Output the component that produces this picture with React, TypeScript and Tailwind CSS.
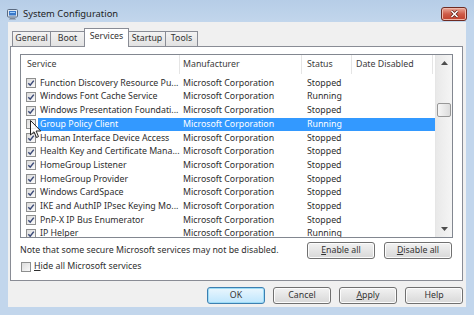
import React from "react";

const rows = [
  { name: "Function Discovery Resource Pu...", status: "Stopped", checked: true },
  { name: "Windows Font Cache Service", status: "Running", checked: true },
  { name: "Windows Presentation Foundati...", status: "Stopped", checked: true },
  { name: "Group Policy Client", status: "Running", checked: false, selected: true },
  { name: "Human Interface Device Access", status: "Stopped", checked: true },
  { name: "Health Key and Certificate Mana...", status: "Stopped", checked: true },
  { name: "HomeGroup Listener", status: "Stopped", checked: true },
  { name: "HomeGroup Provider", status: "Stopped", checked: true },
  { name: "Windows CardSpace", status: "Stopped", checked: true },
  { name: "IKE and AuthIP IPsec Keying Mo...", status: "Stopped", checked: true },
  { name: "PnP-X IP Bus Enumerator", status: "Stopped", checked: true },
  { name: "IP Helper", status: "Running", checked: true },
];

function Check({ checked }: { checked: boolean }) {
  return (
    <span className="flex h-[10px] w-[10px] shrink-0 items-center justify-center border border-[#8e8f8f] bg-gradient-to-br from-[#dcdcdc] to-[#fafafa]">
      {checked && (
        <svg width="8" height="8" viewBox="0 0 8 8">
          <path d="M1.3 4.2 L3.2 6.2 L6.8 1.6" fill="none" stroke="#3b4a78" strokeWidth="1.5" />
        </svg>
      )}
    </span>
  );
}

function Btn({ children, primary, wide }: { children: React.ReactNode; primary?: boolean; wide?: boolean }) {
  return (
    <div
      className={
        "flex h-[17px] items-center justify-center rounded-[3px] border text-[8.8px] text-[#333] " +
        (wide ? "w-[68px] " : "w-[58px] ") +
        (primary
          ? "border-[#3c7fb1] bg-gradient-to-b from-[#eaf6fd] to-[#bee6fd] shadow-[inset_0_0_0_1px_#9ddcf7]"
          : "border-[#707070] bg-gradient-to-b from-[#f2f2f2] to-[#d8d8d8] shadow-[inset_0_0_0_1px_#fcfcfc]")
      }
    >
      {children}
    </div>
  );
}

function Tab({ label, w, active }: { label: string; w: string; active?: boolean }) {
  return (
    <div
      className={
        "-ml-px flex items-center justify-center border border-[#898c95] text-[8.8px] text-[#333] " +
        w +
        (active
          ? " relative z-10 mb-[-1px] h-[19px] border-b-0 bg-white pb-[2px]"
          : " h-[15px] border-b-0 bg-gradient-to-b from-[#f3f3f3] to-[#e2e2e2]")
      }
    >
      {label}
    </div>
  );
}

function Arrow({ up }: { up?: boolean }) {
  return (
    <div className="flex h-[16px] items-center justify-center">
      <svg width="7" height="4" viewBox="0 0 7 4">
        <path d={up ? "M0 4 L3.5 0 L7 4 Z" : "M0 0 L3.5 4 L7 0 Z"} fill="#4d4d4d" />
      </svg>
    </div>
  );
}

export default function App() {
  return (
    <div
      className="relative flex h-[315px] w-[474px] flex-col overflow-hidden bg-[#c2d6ec]"
      style={{ fontFamily: '"Noto Sans", "Open Sans", sans-serif' }}
    >
      {/* Title bar */}
      <div className="flex h-[22px] items-center bg-gradient-to-b from-[#b6cde7] to-[#c2d6ec] pl-[7px] pr-[7px] pt-[6px]">
        <svg width="12" height="11" viewBox="0 0 12 11" className="mr-[4px]">
          <rect x="0.5" y="0.5" width="10" height="7.5" rx="1" fill="#dfe6ee" stroke="#5a6a80" />
          <rect x="2" y="2" width="7" height="4.5" fill="#3a78c8" />
          <rect x="3" y="3" width="5" height="1" fill="#9fd0ff" />
          <path d="M3 9 H8 L9 10.5 H2 Z" fill="#7d8898" />
        </svg>
        <span className="text-[9.4px] text-[#1e1e1e]">System Configuration</span>
        <div className="ml-auto flex h-[14px] w-[26px] items-center justify-center rounded-[3px] border border-[#6e2b22] bg-gradient-to-b from-[#e9a99b] via-[#cf5b48] to-[#c0402c] shadow-[inset_0_0_0_1px_#f0b8aa]">
          <svg width="9" height="8" viewBox="0 0 9 8">
            <path d="M1.5 1 L7.5 7 M7.5 1 L1.5 7" stroke="#5a1a12" strokeWidth="3" />
            <path d="M1.5 1 L7.5 7 M7.5 1 L1.5 7" stroke="#ffffff" strokeWidth="1.6" />
          </svg>
        </div>
      </div>

      {/* Client area */}
      <div className="mx-[8px] flex h-[285px] flex-col bg-[#f0f0f0]">
        {/* Tabs */}
        <div className="flex h-[24px] items-end pl-[5px]">
          <Tab label="General" w="w-[39px]" />
          <Tab label="Boot" w="w-[35px]" />
          <Tab label="Services" w="w-[45px]" active />
          <Tab label="Startup" w="w-[38px]" />
          <Tab label="Tools" w="w-[33px]" />
        </div>

        {/* Panel */}
        <div className="ml-[2px] mr-[3px] flex h-[235px] flex-col border border-[#898c95] bg-white px-[9px] pt-[7px]">
          {/* List view */}
          <div className="flex h-[184px] border border-[#828790] bg-white">
            <div className="flex min-w-0 flex-1 flex-col overflow-hidden">
              <div className="flex h-[19px] shrink-0 items-center text-[8.8px] text-[#3c3c3c]">
                <div className="flex h-full w-[159px] items-center border-r border-[#e5e5e5] pl-[6px]">Service</div>
                <div className="flex h-full w-[122px] items-center border-r border-[#e5e5e5] pl-[3px]">Manufacturer</div>
                <div className="flex h-full w-[50px] items-center border-r border-[#e5e5e5] pl-[5px]">Status</div>
                <div className="flex h-full w-[81px] items-center border-r border-[#e5e5e5] pl-[4px]">Date Disabled</div>
              </div>
              <div className="pt-[2.5px]">
                {rows.map((r) => (
                  <div key={r.name} className="flex h-[13.7px] items-center text-[8.8px] text-[#2e2e2e]">
                    <div className="flex w-[17px] shrink-0 justify-start pl-[5px]">
                      <Check checked={r.checked} />
                    </div>
                    <div
                      className={
                        "flex h-full flex-1 items-center " +
                        (r.selected ? "bg-[#3399ff] text-white" : "")
                      }
                    >
                      <div className="w-[142px] shrink-0 whitespace-nowrap pl-[2px]">{r.name}</div>
                      <div className="w-[122px] shrink-0 whitespace-nowrap pl-[3px]">Microsoft Corporation</div>
                      <div className="w-[50px] shrink-0 pl-[5px]">{r.status}</div>
                      <div className="w-[81px] shrink-0" />
                    </div>
                  </div>
                ))}
              </div>
            </div>
            {/* Scrollbar */}
            <div className="flex w-[17px] shrink-0 flex-col border-l border-[#e6e6e6] bg-gradient-to-r from-[#e9e9e9] to-[#f5f5f5]">
              <Arrow up />
              <div className="mt-[32px] ml-[1px] h-[14px] w-[14px] rounded-[2px] border border-[#979797] bg-gradient-to-r from-[#f6f6f6] to-[#dcdcdc]" />
              <div className="flex-1" />
              <Arrow />
            </div>
          </div>

          {/* Note + enable/disable */}
          <div className="mt-[4px] flex items-center">
            <span className="text-[8.8px] text-[#2e2e2e]">Note that some secure Microsoft services may not be disabled.</span>
            <div className="ml-auto flex gap-[9px] pr-[1px]">
              <Btn wide>
                <span>
                  <span className="underline">E</span>nable all
                </span>
              </Btn>
              <Btn wide>
                <span>
                  <span className="underline">D</span>isable all
                </span>
              </Btn>
            </div>
          </div>

          {/* Hide all */}
          <div className="mt-[1px] flex items-center gap-[3px] pl-[1px] text-[8.8px] text-[#2e2e2e]">
            <Check checked={false} />
            <span>
              <span className="underline">H</span>ide all Microsoft services
            </span>
          </div>
        </div>

        {/* Bottom buttons */}
        <div className="mr-[3px] mt-[6px] flex justify-end gap-[8px]">
          <Btn primary>OK</Btn>
          <Btn>Cancel</Btn>
          <Btn>
            <span>
              <span className="underline">A</span>pply
            </span>
          </Btn>
          <Btn>Help</Btn>
        </div>
      </div>

      {/* Mouse pointer */}
      <svg
        className="pointer-events-none absolute left-[30px] top-[120px]"
        width="12"
        height="19"
        viewBox="0 0 12 19"
      >
        <path
          d="M0.5 0.5 L0.5 15 L4 11.8 L6.5 17.5 L8.5 16.6 L6.1 11 L10.8 11 Z"
          fill="#ffffff"
          fillOpacity="0.85"
          stroke="#222"
          strokeWidth="1"
          strokeLinejoin="round"
        />
      </svg>
    </div>
  );
}
